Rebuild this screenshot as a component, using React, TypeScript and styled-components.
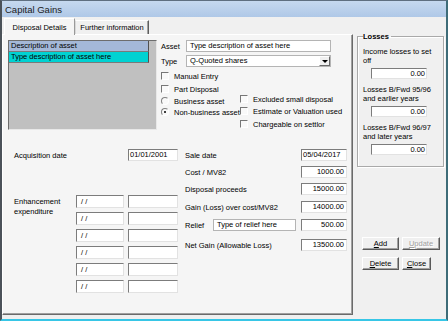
import React from 'react'
import styled, { createGlobalStyle, css } from 'styled-components'

const enhancementRows = [0, 1, 2, 3, 4, 5]

const saleRows = [
  { label: 'Sale date', value: '05/04/2017', gap: 0, align: 'left' as const },
  { label: 'Cost / MV82', value: '1000.00', gap: 5, align: 'right' as const },
  { label: 'Disposal proceeds', value: '15000.00', gap: 5, align: 'right' as const },
  { label: 'Gain (Loss) over cost/MV82', value: '14000.00', gap: 6, align: 'right' as const },
  { label: 'Relief', value: '500.00', gap: 6, align: 'right' as const, relief: true },
  { label: 'Net Gain (Allowable Loss)', value: '13500.00', gap: 8, align: 'right' as const },
]

const losses = [
  { text: ['Income losses to set', 'off'], value: '0.00' },
  { text: ['Losses B/Fwd 95/96', 'and earlier years'], value: '0.00' },
  { text: ['Losses B/Fwd 96/97', 'and later years'], value: '0.00' },
]

const App = () => {
  return (
    <>
      <GlobalStyle />
      <Window>
        <TitleBar>Capital Gains</TitleBar>
        <Body>
          <TabArea>
            <TabStrip>
              <Tab $active $w={71}>Disposal Details</Tab>
              <Tab $w={74}>Further information</Tab>
            </TabStrip>
            <TabPanel>
              <TopSection>
                <ListBox>
                  <ListRow $kind="header">Description of asset</ListRow>
                  <ListRow $kind="selected">Type description of asset here</ListRow>
                </ListBox>
                <AssetForm>
                  <FormRow>
                    <FormLabel>Asset</FormLabel>
                    <Field $w={145} $flat>Type description of asset here</Field>
                  </FormRow>
                  <FormRow $gap={3}>
                    <FormLabel>Type</FormLabel>
                    <Select>
                      <span>Q-Quoted shares</span>
                      <DropButton>
                        <Arrow />
                      </DropButton>
                    </Select>
                  </FormRow>
                  <OptionRow $gap={4}>
                    <CheckBox />
                    Manual Entry
                  </OptionRow>
                  <OptionRow $gap={3}>
                    <CheckBox />
                    Part Disposal
                  </OptionRow>
                  <OptionsGrid>
                    <RadioColumn>
                      <OptionRow>
                        <Radio />
                        Business asset
                      </OptionRow>
                      <OptionRow $gap={1}>
                        <Radio $checked />
                        Non-business asset
                      </OptionRow>
                    </RadioColumn>
                    <CheckColumn>
                      <OptionRow>
                        <CheckBox />
                        Excluded small disposal
                      </OptionRow>
                      <OptionRow $gap={2}>
                        <CheckBox />
                        Estimate or Valuation used
                      </OptionRow>
                      <OptionRow $gap={3}>
                        <CheckBox />
                        Chargeable on settlor
                      </OptionRow>
                    </CheckColumn>
                  </OptionsGrid>
                </AssetForm>
              </TopSection>

              <LowerSection>
                <DatesPart>
                  <FormRow>
                    <AcqLabel>Acquisition date</AcqLabel>
                    <Field $w={50} $pad={1}>01/01/2001</Field>
                  </FormRow>
                  <Enhancement>
                    <EnhLabel>
                      Enhancement
                      <br />
                      expenditure
                    </EnhLabel>
                    <EnhGrid>
                      {enhancementRows.map(i => (
                        <React.Fragment key={i}>
                          <EnhField $w={48} $pad={4}>/ /</EnhField>
                          <EnhField $w={50} />
                        </React.Fragment>
                      ))}
                    </EnhGrid>
                  </Enhancement>
                </DatesPart>

                <AmountsPart>
                  {saleRows.map(r => (
                    <FormRow key={r.label} $gap={r.gap}>
                      {r.relief ? (
                        <>
                          <ReliefLabel>{r.label}</ReliefLabel>
                          <Field $w={83} $flat>Type of relief here</Field>
                          <Spacer />
                        </>
                      ) : (
                        <AmountLabel>{r.label}</AmountLabel>
                      )}
                      <Field $w={46} $align={r.align} $pad={r.align === 'left' ? 1 : 2}>
                        {r.value}
                      </Field>
                    </FormRow>
                  ))}
                </AmountsPart>
              </LowerSection>
            </TabPanel>
          </TabArea>

          <SideColumn>
            <GroupBox>
              <Legend>Losses</Legend>
              {losses.map((l, i) => (
                <LossBlock key={i}>
                  <LossText>
                    {l.text[0]}
                    <br />
                    {l.text[1]}
                  </LossText>
                  <LossField $w={56} $align="right" $pad={1}>{l.value}</LossField>
                </LossBlock>
              ))}
            </GroupBox>
            <ButtonGrid>
              <Button $w={37}><u>A</u>dd</Button>
              <Button $w={38} disabled><u>U</u>pdate</Button>
              <Button $w={37}><u>D</u>elete</Button>
              <Button $w={29}><u>C</u>lose</Button>
            </ButtonGrid>
          </SideColumn>
        </Body>
      </Window>
    </>
  )
}

export default App

const GlobalStyle = createGlobalStyle`
  html, body {
    margin: 0;
    padding: 0;
    overflow: hidden;
    background: #f0f0f0;
  }
  body {
    font-family: "Liberation Sans", Arial, sans-serif;
    font-size: 7.5px;
    color: #000;
  }
`

const Window = styled.div`
  box-sizing: border-box;
  width: 448px;
  height: 321px;
  display: flex;
  flex-direction: column;
  border-top: 1px solid #5f6f80;
  border-left: 2px solid #4b5259;
  border-right: 2px solid #3e6c78;
  border-bottom: 2px solid #37c6e6;
  background: #f0f0f0;
  overflow: hidden;
`

const TitleBar = styled.div`
  height: 16px;
  flex: none;
  display: flex;
  align-items: center;
  padding-left: 3px;
  background: linear-gradient(#c6d9ef, #afc8e7);
  font-size: 9.5px;
  color: #1b1b1b;
`

const Body = styled.div`
  flex: 1;
  display: flex;
  min-height: 0;
`

const TabArea = styled.div`
  width: 351px;
  flex: none;
  display: flex;
  flex-direction: column;
  padding-bottom: 4px;
`

const TabStrip = styled.div`
  height: 17px;
  flex: none;
  display: flex;
  align-items: flex-end;
  padding-left: 2px;
`

const Tab = styled.div<{ $active?: boolean; $w: number }>`
  box-sizing: border-box;
  width: ${p => p.$w}px;
  height: ${p => (p.$active ? 17 : 14)}px;
  margin-bottom: ${p => (p.$active ? -1 : 0)}px;
  display: flex;
  align-items: center;
  justify-content: center;
  border: 1px solid;
  border-bottom: none;
  border-color: #fff #9a9a9a transparent #fff;
  background: ${p => (p.$active ? '#f5f5f5' : '#f0f0f0')};
  white-space: nowrap;
  z-index: 1;

  ${p =>
    !p.$active &&
    css`
      border-color: #fff #5e5e5e transparent #d8d8d8;
      box-shadow: inset -1px 0 0 #a0a0a0;
    `}
`

const TabPanel = styled.div`
  flex: 1;
  box-sizing: border-box;
  display: flex;
  flex-direction: column;
  border: 1px solid;
  border-color: #fff #6a6a6a #6a6a6a #fff;
  box-shadow: inset -1px -1px 0 #a0a0a0;
  background: #f5f5f5;
`

const TopSection = styled.div`
  display: flex;
  margin-top: 5px;
  padding-left: 5px;
`

const ListBox = styled.div`
  box-sizing: border-box;
  width: 149px;
  height: 90px;
  flex: none;
  background: #c0c0c0;
  border-top: 1px solid #6d6d6d;
  border-left: 1px solid #6d6d6d;
  border-right: 1px solid #e8e8e8;
  border-bottom: 1px solid #e8e8e8;
`

const ListRow = styled.div<{ $kind: 'header' | 'selected' }>`
  box-sizing: border-box;
  width: 140px;
  height: 11px;
  line-height: 10px;
  padding-left: 2px;
  white-space: nowrap;
  border-right: 1px solid #505050;
  border-bottom: 1px solid #7a7a7a;
  background: ${p => (p.$kind === 'header' ? '#a4b8d8' : '#00d2d2')};
`

const AssetForm = styled.div`
  display: flex;
  flex-direction: column;
  margin-left: 4px;
`

const FormRow = styled.div<{ $gap?: number }>`
  display: flex;
  align-items: center;
  margin-top: ${p => p.$gap ?? 0}px;
`

const FormLabel = styled.span`
  width: 25px;
  flex: none;
`

const Field = styled.div<{ $w: number; $align?: 'left' | 'right'; $flat?: boolean; $pad?: number }>`
  box-sizing: border-box;
  width: ${p => p.$w}px;
  height: 12px;
  flex: none;
  background: #fff;
  border: 1px solid;
  border-color: #7c7c7c #e2e2e2 #e2e2e2 #7c7c7c;
  padding: 0 ${p => p.$pad ?? 2}px;
  line-height: 10px;
  text-align: ${p => p.$align ?? 'left'};
  white-space: nowrap;
  overflow: hidden;

  ${p =>
    p.$flat &&
    css`
      border-color: #b4b4b4;
      padding: 0 3px;
    `}
`

const EnhField = styled(Field)`
  height: 13px;
  line-height: 11px;
`

const Select = styled.div`
  box-sizing: border-box;
  width: 145px;
  height: 12px;
  display: flex;
  align-items: center;
  justify-content: space-between;
  background: #fff;
  border: 1px solid #b4b4b4;
  padding-left: 3px;
  line-height: 10px;
`

const DropButton = styled.div`
  box-sizing: border-box;
  width: 11px;
  height: 10px;
  display: flex;
  align-items: center;
  justify-content: center;
  background: #f0f0f0;
  border: 1px solid;
  border-color: #fff #6a6a6a #6a6a6a #fff;
`

const Arrow = styled.span`
  width: 0;
  height: 0;
  border-left: 3px solid transparent;
  border-right: 3px solid transparent;
  border-top: 3px solid #000;
`

const OptionRow = styled.div<{ $gap?: number }>`
  display: flex;
  align-items: center;
  gap: 5px;
  height: 10px;
  margin-top: ${p => p.$gap ?? 0}px;
  white-space: nowrap;
`

const CheckBox = styled.span`
  box-sizing: border-box;
  width: 8px;
  height: 8px;
  flex: none;
  border: 1px solid;
  border-color: #777 #fff #fff #777;
  background: #f9f9f9;
`

const Radio = styled.span<{ $checked?: boolean }>`
  box-sizing: border-box;
  width: 8px;
  height: 8px;
  flex: none;
  border-radius: 50%;
  border: 1px solid;
  border-color: #808080 #fff #fff #808080;
  background: #f9f9f9;
  display: flex;
  align-items: center;
  justify-content: center;

  ${p =>
    p.$checked &&
    css`
      &::after {
        content: '';
        width: 2px;
        height: 2px;
        border-radius: 50%;
        background: #000;
      }
    `}
`

const OptionsGrid = styled.div`
  display: flex;
`

const RadioColumn = styled.div`
  width: 79px;
  display: flex;
  flex-direction: column;
  padding-top: 2px;
`

const CheckColumn = styled.div`
  display: flex;
  flex-direction: column;
`

const LowerSection = styled.div`
  display: flex;
  margin-top: 19px;
`

const DatesPart = styled.div`
  width: 182px;
  box-sizing: border-box;
  padding-left: 11px;
  display: flex;
  flex-direction: column;
`

const AcqLabel = styled.span`
  width: 114px;
  flex: none;
`

const Enhancement = styled.div`
  display: flex;
  margin-top: 34px;
`

const EnhLabel = styled.div`
  width: 62px;
  flex: none;
  line-height: 9.5px;
  padding-top: 2px;
`

const EnhGrid = styled.div`
  display: grid;
  grid-template-columns: 48px 50px;
  column-gap: 4px;
  row-gap: 4px;
`

const AmountsPart = styled.div`
  width: 162px;
  display: flex;
  flex-direction: column;
`

const AmountLabel = styled.span`
  flex: 1;
  white-space: nowrap;
`

const ReliefLabel = styled.span`
  width: 28px;
  flex: none;
`

const Spacer = styled.span`
  flex: 1;
`

const SideColumn = styled.div`
  flex: 1;
  display: flex;
  flex-direction: column;
`

const GroupBox = styled.fieldset`
  box-sizing: border-box;
  width: 87px;
  margin: 15px 0 0 4px;
  padding: 0 4px 11px 5px;
  min-inline-size: 0;
  border: 1px solid #a9a9a9;
  box-shadow: 1px 1px 0 #fff, inset 1px 1px 0 #fff;
`

const Legend = styled.legend`
  padding: 0 2px 0 0;
  font-weight: bold;
  line-height: 9px;
`

const LossBlock = styled.div`
  display: flex;
  flex-direction: column;
  margin-top: 6px;
`

const LossText = styled.div`
  line-height: 9px;
  white-space: nowrap;
`

const LossField = styled(Field)`
  height: 11px;
  line-height: 9px;
  margin: 3px 0 0 8px;
`

const ButtonGrid = styled.div`
  display: grid;
  grid-template-columns: 37px 38px;
  column-gap: 3px;
  row-gap: 7px;
  margin: 70px 0 0 9px;
`

const Button = styled.button<{ $w: number }>`
  box-sizing: border-box;
  width: ${p => p.$w}px;
  height: 13px;
  padding: 0;
  font-family: inherit;
  font-size: 7.5px;
  line-height: 10px;
  color: #000;
  background: #f0f0f0;
  border: 1px solid;
  border-color: #fff #5a5a5a #5a5a5a #fff;
  box-shadow: inset -1px -1px 0 #a0a0a0;

  &:disabled {
    color: #a0a0a0;
    text-shadow: 1px 1px 0 #fff;
  }
`
